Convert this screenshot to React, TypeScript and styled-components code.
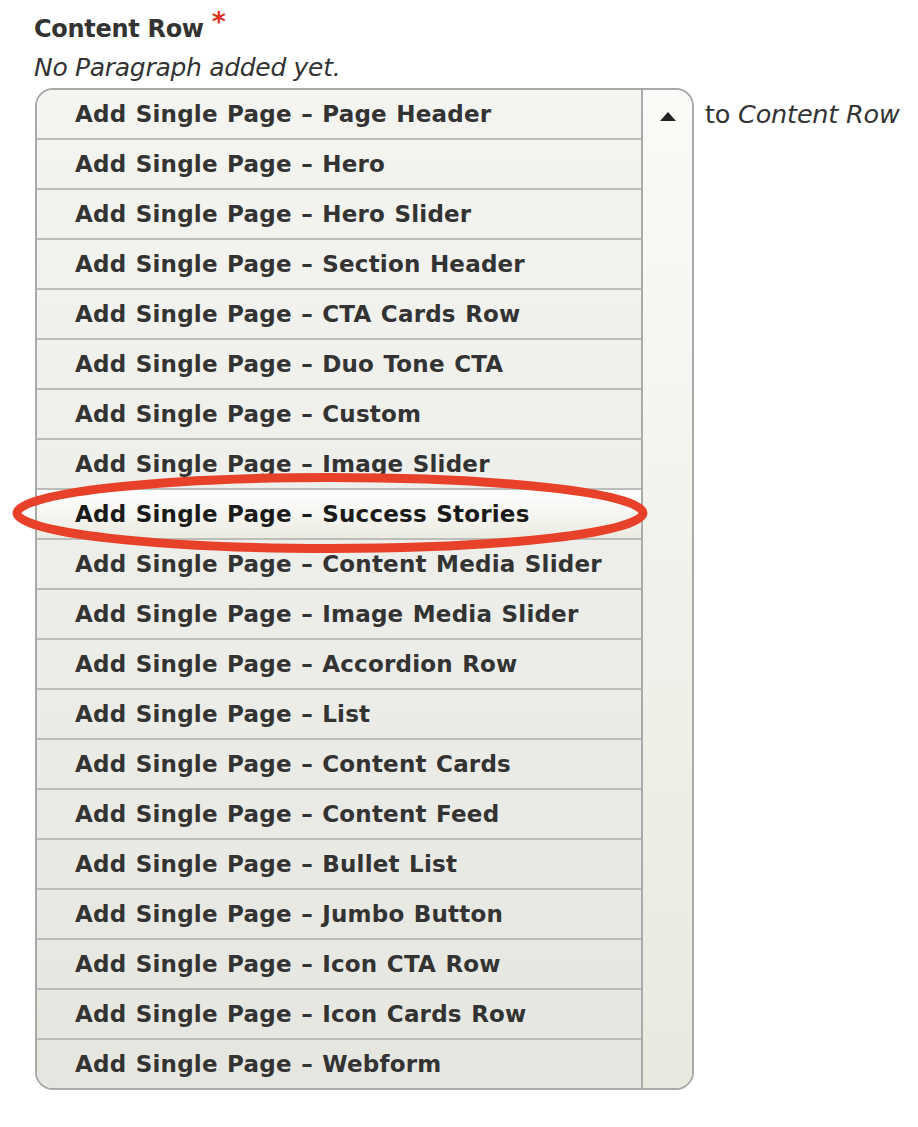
import styled, { createGlobalStyle } from 'styled-components'

const items = [
  'Page Header',
  'Hero',
  'Hero Slider',
  'Section Header',
  'CTA Cards Row',
  'Duo Tone CTA',
  'Custom',
  'Image Slider',
  'Success Stories',
  'Content Media Slider',
  'Image Media Slider',
  'Accordion Row',
  'List',
  'Content Cards',
  'Content Feed',
  'Bullet List',
  'Jumbo Button',
  'Icon CTA Row',
  'Icon Cards Row',
  'Webform',
]

export default function App() {
  return (
    <>
      <GlobalStyle />
      <Page>
        <Label>
          Content Row<Required>*</Required>
        </Label>
        <Empty>No Paragraph added yet.</Empty>
        <Row>
          <ListBox>
            <Options>
              {items.map((name, i) => (
                <Option key={name} $active={name === 'Success Stories'} $index={i}>
                  Add Single Page – {name}
                </Option>
              ))}
            </Options>
            <Scrollbar>
              <Arrow />
            </Scrollbar>
            <Marker viewBox="0 0 650 90">
              <ellipse cx="318" cy="43" rx="313" ry="35.5" fill="none" stroke="#e8412a" strokeWidth="9" />
            </Marker>
          </ListBox>
          <Target>
            to <em>Content Row</em>
          </Target>
        </Row>
      </Page>
    </>
  )
}

const GlobalStyle = createGlobalStyle`
  body {
    margin: 0;
    background: #fff;
    font-family: "DejaVu Sans", "Noto Sans", sans-serif;
    color: #333;
  }
`

const Page = styled.div`
  padding: 10px 0 0 34px;
`

const Label = styled.div`
  font-size: 24px;
  font-weight: bold;
  color: #333;
  line-height: 36px;
  letter-spacing: -0.3px;
`

const Required = styled.span`
  color: #e0301e;
  font-size: 27px;
  margin-left: 8px;
  position: relative;
  top: -6px;
`

const Empty = styled.div`
  font-style: italic;
  font-size: 25px;
  line-height: 41px;
  color: #333;
  letter-spacing: -0.3px;
`

const Row = styled.div`
  display: flex;
  align-items: flex-start;
`

const ListBox = styled.div`
  position: relative;
  margin-left: 1px;
  width: 655px;
  display: flex;
  border: 2px solid #aaa;
  border-radius: 18px;
`

const Options = styled.div`
  width: 604px;
  border-right: 2px solid #aaa;
  border-radius: 16px 0 0 16px;
  overflow: hidden;
  background: linear-gradient(#f4f4f1, #e6e6e1);
`

const Option = styled.div<{ $active: boolean; $index: number }>`
  height: 48px;
  border-top: ${(p) => (p.$index === 0 ? '0' : '2px solid #bcbcb8')};
  padding-left: 38px;
  display: flex;
  align-items: center;
  font-size: 23px;
  font-weight: bold;
  color: ${(p) => (p.$active ? '#1a1a1a' : '#333')};
  letter-spacing: 0.2px;
  word-spacing: 1.2px;
  background: ${(p) => (p.$active ? 'linear-gradient(#ffffff, #ecebe2)' : 'transparent')};
`

const Scrollbar = styled.div`
  flex: 1;
  border-radius: 0 16px 16px 0;
  background: linear-gradient(#fafaf8, #e9e9e0);
  display: flex;
  justify-content: center;
  padding-top: 22px;
`

const Arrow = styled.div`
  width: 0;
  height: 0;
  border-left: 8px solid transparent;
  border-right: 8px solid transparent;
  border-bottom: 9px solid #222;
`

const Marker = styled.svg`
  position: absolute;
  left: -25px;
  top: 380px;
  width: 650px;
  height: 90px;
  pointer-events: none;
`

const Target = styled.div`
  margin-left: 11px;
  font-size: 25.5px;
  line-height: 52px;
  color: #333;
  letter-spacing: -0.2px;
`
